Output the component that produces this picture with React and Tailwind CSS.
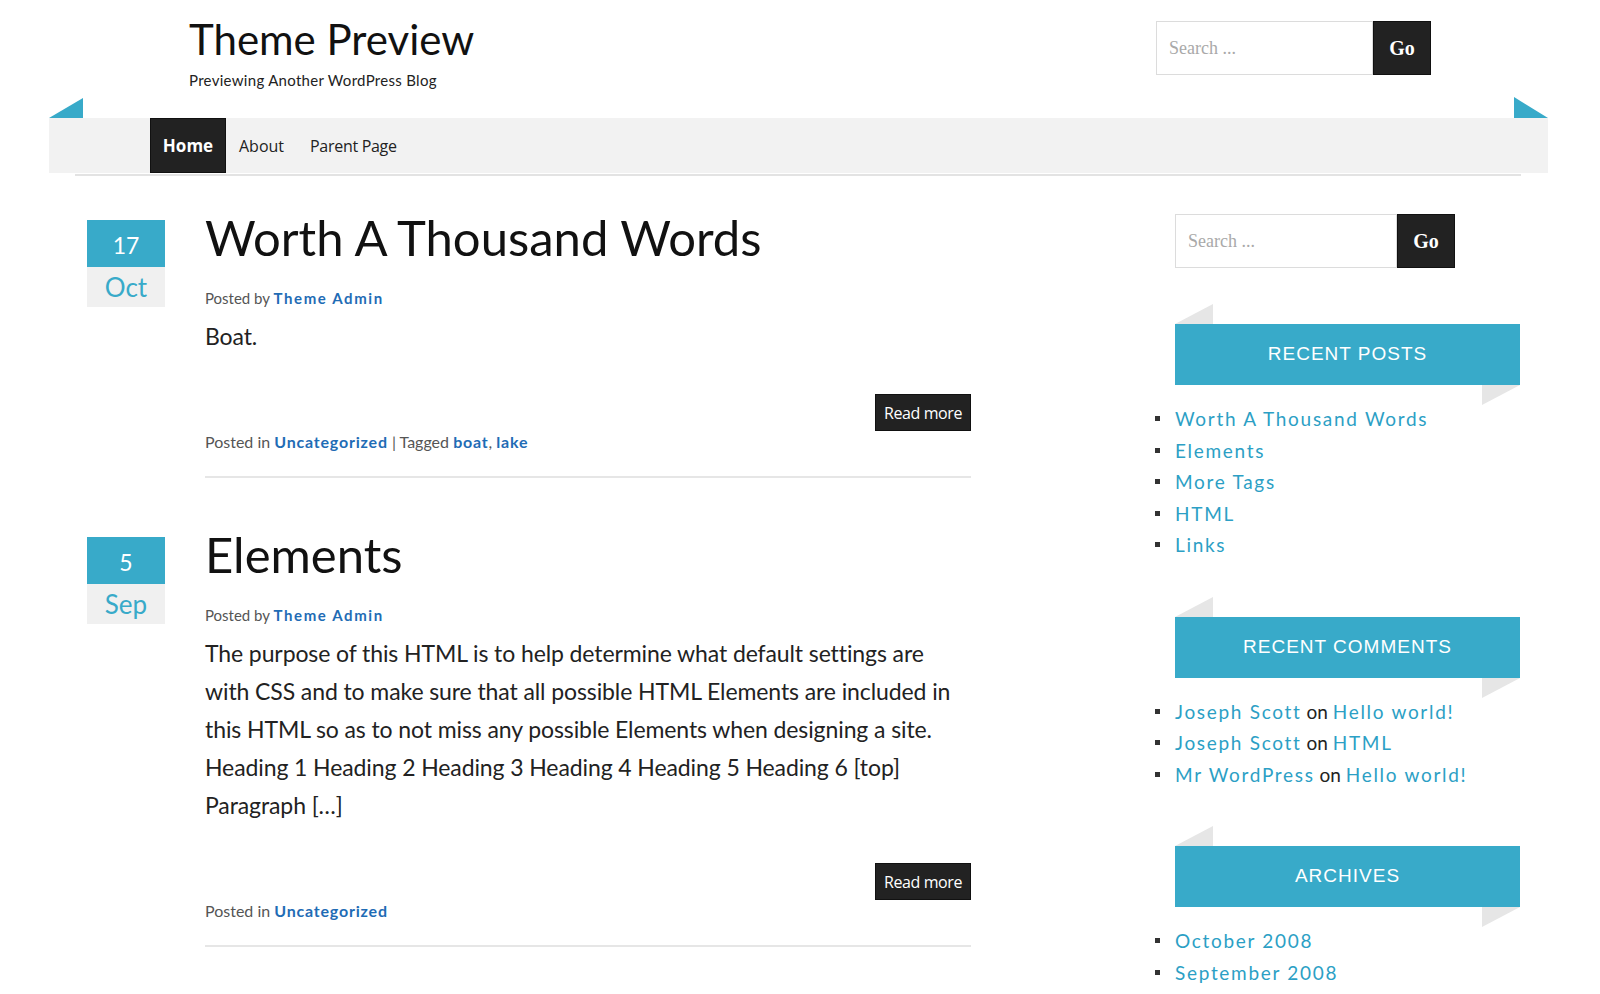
const recentPosts = ["Worth A Thousand Words", "Elements", "More Tags", "HTML", "Links"];

const recentComments = [
  { who: "Joseph Scott", post: "Hello world!" },
  { who: "Joseph Scott", post: "HTML" },
  { who: "Mr WordPress", post: "Hello world!" },
];

const archives = ["October 2008", "September 2008"];

function SearchForm({ inputWidth }) {
  return (
    <form className="flex h-[54px]" onSubmit={(e) => e.preventDefault()}>
      <input
        type="text"
        placeholder="Search ..."
        className="h-full border border-[#dcdcdc] bg-white px-[12px] text-[18px] text-[#555] placeholder:text-[#a9a9a9] outline-none"
        style={{ width: inputWidth, fontFamily: '"Liberation Serif", serif' }}
      />
      <button
        type="submit"
        className="h-full w-[58px] border border-[#111] bg-[#222] text-[20px] font-bold text-white"
        style={{ fontFamily: '"Liberation Serif", serif' }}
      >
        Go
      </button>
    </form>
  );
}

function DateBox({ day, month }) {
  return (
    <div className="mt-[13px] w-[78px] shrink-0 text-center font-['Lato',sans-serif]">
      <div className="flex h-[47px] items-center justify-center bg-[#38aac9] pt-[4px] text-[23px] text-white">{day}</div>
      <div className="flex h-[40px] items-center justify-center bg-[#f0f0f0] text-[26px] text-[#38aac9]">{month}</div>
    </div>
  );
}

function Post({ day, month, title, children, tags }) {
  return (
    <article className="flex">
      <DateBox day={day} month={month} />
      <div className="ml-[40px] w-[766px]">
        <h2 className="font-['Lato',sans-serif] text-[49px] font-normal leading-[60px] text-[#111]">{title}</h2>
        <p className="mt-[19px] font-['Lato',sans-serif] text-[15px] leading-[24px] text-[#555]">
          Posted by <a href="#" className="font-bold tracking-[1.6px] text-[#1f6cb5]">Theme Admin</a>
        </p>
        <div className="mt-[7px] font-['Lato',sans-serif] text-[23px] leading-[38px] tracking-[-0.1px] text-[#222]">{children}</div>
        <div className="mt-[39px] flex justify-end">
          <a href="#" className="flex h-[37px] items-center border border-[#111] bg-[#222] px-[8px] font-['Open_Sans',sans-serif] text-[16px] tracking-[-0.4px] text-white">
            Read more
          </a>
        </div>
        <p className="font-['Lato',sans-serif] text-[16px] leading-[22px] text-[#555]">
          Posted in <a href="#" className="font-bold tracking-[0.8px] text-[#1f6cb5]">Uncategorized</a>
          {tags && (
            <>
              {" "}| Tagged{" "}
              <a href="#" className="font-bold tracking-[0.8px] text-[#1f6cb5]">boat</a>,{" "}
              <a href="#" className="font-bold tracking-[0.8px] text-[#1f6cb5]">lake</a>
            </>
          )}
        </p>
        <div className="mt-[23px] h-[2px] bg-[#e6e6e6]" />
      </div>
    </article>
  );
}

function Widget({ title, children }) {
  return (
    <section className="mt-[56px]">
      <div className="relative flex h-[61px] items-center justify-center bg-[#38aac9]">
        <svg className="absolute -top-[20px] left-0" width="38" height="20" viewBox="0 0 38 20">
          <polygon points="0,20 38,0 38,20" fill="#e6e6e6" />
        </svg>
        <h3 className="font-['Liberation_Sans',sans-serif] text-[19px] font-medium tracking-[1px] text-white">{title}</h3>
        <svg className="absolute right-0 top-full" width="38" height="20" viewBox="0 0 38 20">
          <polygon points="0,0 38,0 0,20" fill="#e6e6e6" />
        </svg>
      </div>
      <ul className="-ml-[20px] mt-[18px] font-['Lato',sans-serif] text-[19px] leading-[31.5px] tracking-[1.7px]">{children}</ul>
    </section>
  );
}

function Item({ children }) {
  return (
    <li className="flex items-center">
      <span className="mr-[15px] h-[5px] w-[5px] shrink-0 bg-[#333]" />
      <span>{children}</span>
    </li>
  );
}

export default function App() {
  return (
    <div className="min-h-screen bg-white pb-[40px]">
      <div className="pl-[49px] pr-[52px]">
        <header className="flex h-[118px] justify-between">
          <div className="pl-[140px] pt-[14px]">
            <h1 className="font-['Lato',sans-serif] text-[42px] leading-[50px] text-[#111]">Theme Preview</h1>
            <p className="mt-[6px] font-['Lato',sans-serif] text-[15px] leading-[20px] tracking-[0.3px] text-[#222]">Previewing Another WordPress Blog</p>
          </div>
          <div className="mr-[117px] mt-[21px]">
            <SearchForm inputWidth={217} />
          </div>
        </header>

        <nav className="relative flex h-[55px] bg-[#f2f2f2] pl-[101px] font-['Open_Sans',sans-serif] text-[16px]">
          <svg className="absolute -top-[20px] left-0" width="34" height="20" viewBox="0 0 34 20">
            <polygon points="0,20 34,0 34,20" fill="#38aac9" />
          </svg>
          <svg className="absolute -top-[21px] right-0" width="34" height="21" viewBox="0 0 34 21">
            <polygon points="0,0 34,21 0,21" fill="#38aac9" />
          </svg>
          <a href="#" className="flex w-[76px] items-center justify-center border border-[#111] bg-[#222] text-[17px] font-bold text-white">Home</a>
          <a href="#" className="flex items-center px-[13px] text-[#222]">About</a>
          <a href="#" className="flex items-center px-[13px] tracking-[-0.3px] text-[#222]">Parent Page</a>
        </nav>
        <div className="ml-[26px] mr-[27px] mt-px h-[2px] bg-[#e3e3e3]" />
      </div>

      <div className="ml-[87px] flex">
        <main className="w-[884px] pt-[31px]">
          <Post day="17" month="Oct" title="Worth A Thousand Words" tags>
            <p>Boat.</p>
          </Post>
          <div className="mt-[46px]">
            <Post day="5" month="Sep" title="Elements">
              <p>
                The purpose of this HTML is to help determine what default settings are with CSS and to make sure that all possible HTML Elements are included in this HTML so as to not miss any possible Elements when designing a site. Heading 1 Heading 2 Heading 3 Heading 4 Heading 5 Heading 6 [top] Paragraph […]
              </p>
            </Post>
          </div>
        </main>

        <aside className="ml-[204px] w-[345px] pt-[38px]">
          <SearchForm inputWidth={222} />

          <Widget title="RECENT POSTS">
            {recentPosts.map((p) => (
              <Item key={p}>
                <a href="#" className="text-[#2c9fc5]">{p}</a>
              </Item>
            ))}
          </Widget>

          <Widget title="RECENT COMMENTS">
            {recentComments.map((c, i) => (
              <Item key={i}>
                <a href="#" className="text-[#2c9fc5]">{c.who}</a>
                <span className="tracking-normal text-[#222]"> on </span>
                <a href="#" className="text-[#2c9fc5]">{c.post}</a>
              </Item>
            ))}
          </Widget>

          <Widget title="ARCHIVES">
            {archives.map((a) => (
              <Item key={a}>
                <a href="#" className="text-[#2c9fc5]">{a}</a>
              </Item>
            ))}
          </Widget>
        </aside>
      </div>
    </div>
  );
}
